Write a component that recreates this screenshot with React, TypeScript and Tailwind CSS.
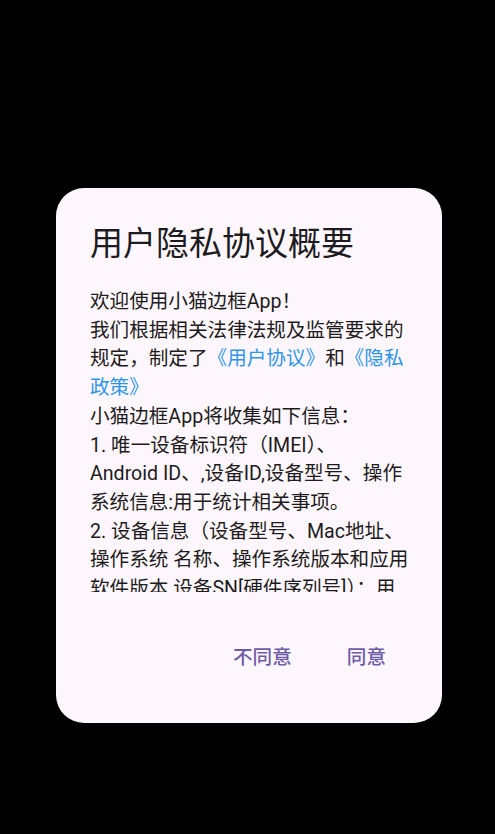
import React from 'react';

const font = { fontFamily: 'Roboto, "Noto Sans CJK SC", sans-serif' };

const Link: React.FC<{ children: React.ReactNode }> = ({ children }) => (
  <span className="text-[#2f95e8]">{children}</span>
);

// lines are laid out as the device wrapped them
const lines: React.ReactNode[] = [
  '欢迎使用小猫边框App！',
  '我们根据相关法律法规及监管要求的',
  <>
    规定，制定了<Link>《用户协议》</Link>和<Link>《隐私</Link>
  </>,
  <Link>政策》</Link>,
  '小猫边框App将收集如下信息：',
  '1. 唯一设备标识符（IMEI）、',
  'Android ID、,设备ID,设备型号、操作',
  '系统信息:用于统计相关事项。',
  '2. 设备信息（设备型号、Mac地址、',
  '操作系统 名称、操作系统版本和应用',
  '软件版本 设备SN[硬件序列号]）：用',
  '于保障账号安全和统计相关事项。',
];

const PrivacyDialog: React.FC = () => {
  return (
    <div className="flex w-[386px] flex-col rounded-[28px] bg-[#fdf7fd] px-[34px] pt-[33px] pb-[37px]">
      <h1 className="text-[33px] leading-[45px] font-normal text-[#1d1b20]">用户隐私协议概要</h1>

      <div className="mt-[22px] h-[304px] overflow-hidden text-[19.6px] leading-[28.7px] text-[#1d1b20]">
        {lines.map((l, i) => (
          <p key={i} className="whitespace-nowrap">
            {l}
          </p>
        ))}
      </div>

      <footer className="mt-[38px] flex justify-end gap-[11px]">
        <button
          type="button"
          className="h-[56px] rounded-full px-[22px] text-[19.6px] font-medium text-[#6e5ba8]"
        >
          不同意
        </button>
        <button
          type="button"
          className="h-[56px] rounded-full px-[22px] text-[19.6px] font-medium text-[#6e5ba8]"
        >
          同意
        </button>
      </footer>
    </div>
  );
};

export default function App() {
  return (
    <div className="h-[834px] w-full bg-black pt-[188px] pl-[56px]" style={font}>
      <PrivacyDialog />
    </div>
  );
}
